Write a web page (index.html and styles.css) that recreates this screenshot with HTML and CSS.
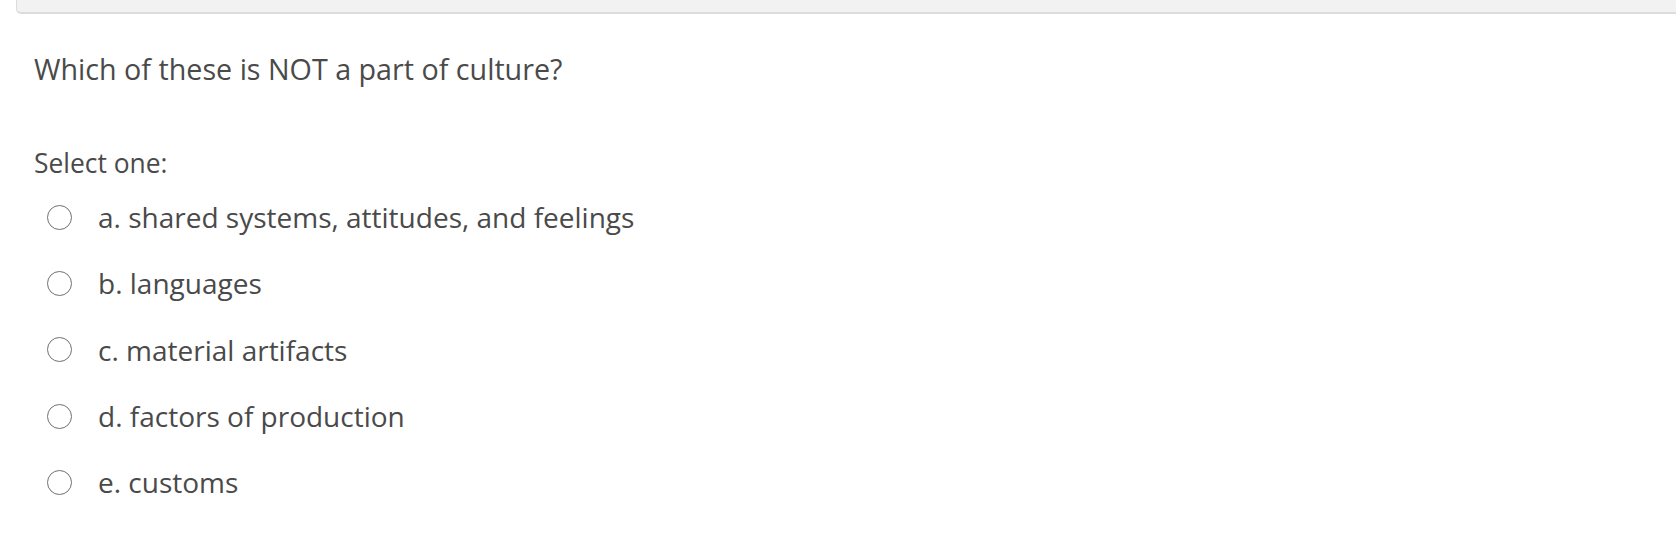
FILE: index.html
```html
<!DOCTYPE html>
<html>
<head>
<meta charset="utf-8">
<link rel="stylesheet" href="styles.css">
</head>
<body>
<div class="topbar"></div>
<div class="content">
  <div class="qtext">Which of these is NOT a part of culture?</div>
  <div class="prompt">Select one:</div>
  <div class="answers">
    <label class="opt"><span class="radio"></span><span class="lbl">a. shared systems, attitudes, and feelings</span></label>
    <label class="opt"><span class="radio"></span><span class="lbl">b. languages</span></label>
    <label class="opt"><span class="radio"></span><span class="lbl">c. material artifacts</span></label>
    <label class="opt"><span class="radio"></span><span class="lbl">d. factors of production</span></label>
    <label class="opt"><span class="radio"></span><span class="lbl">e. customs</span></label>
  </div>
</div>
</body>
</html>
```
FILE: styles.css
```css
html, body {
  margin: 0;
  padding: 0;
  background: #ffffff;
}
body {
  font-family: "Open Sans", "Noto Sans", sans-serif;
  color: #4a4a4a;
  overflow: hidden;
}
.topbar {
  height: 12px;
  margin-left: 16px;
  margin-right: -20px;
  background: #f2f2f2;
  border: 1px solid #dcdcdc;
  border-top: none;
  border-bottom-width: 2px;
  border-bottom-left-radius: 5px;
}
.content {
  padding-left: 34px;
}
.qtext {
  font-size: 28.7px;
  line-height: 32px;
  margin-top: 39px;
}
.prompt {
  font-size: 26.4px;
  line-height: 30px;
  margin-top: 63px;
}
.answers {
  display: flex;
  flex-direction: column;
  margin-top: 6px;
  margin-left: 13px;
}
.opt {
  display: flex;
  align-items: center;
  height: 66.3px;
  font-size: 28px;
}
.radio {
  width: 23px;
  height: 23px;
  border: 1.6px solid #707070;
  border-radius: 50%;
  flex: none;
  margin-right: 26px;
}
```
